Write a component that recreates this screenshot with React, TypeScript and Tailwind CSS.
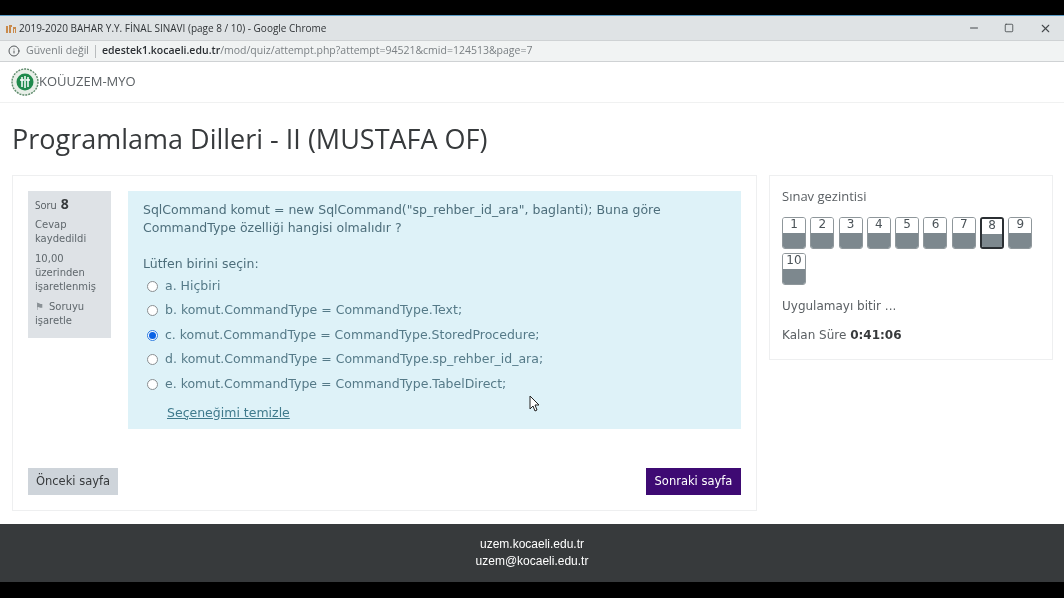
import { Info, Minus, Square, X } from "lucide-react";

const navItems = ["1", "2", "3", "4", "5", "6", "7", "8", "9", "10"];

const answers = [
  { key: "a", text: "a. Hiçbiri", checked: false },
  { key: "b", text: "b. komut.CommandType = CommandType.Text;", checked: false },
  { key: "c", text: "c. komut.CommandType = CommandType.StoredProcedure;", checked: true },
  { key: "d", text: "d. komut.CommandType = CommandType.sp_rehber_id_ara;", checked: false },
  { key: "e", text: "e. komut.CommandType = CommandType.TabelDirect;", checked: false },
];

function Logo() {
  return (
    <svg width="28" height="28" viewBox="0 0 28 28" className="shrink-0">
      <circle cx="14" cy="14" r="13" fill="#e8efe8" stroke="#5d8a6b" strokeWidth="1.4" strokeDasharray="2 1" />
      <circle cx="14" cy="14" r="8.5" fill="#1f8a4c" />
      <path d="M11 9v10M17 9v10M9 12h4M15 12h4M14 8v12" stroke="#ffffff" strokeWidth="1.5" />
    </svg>
  );
}

function Radio({ checked }: { checked: boolean }) {
  return (
    <span
      className={
        checked
          ? "w-[11px] h-[11px] rounded-full border border-[#2f7de1] bg-white flex items-center justify-center shrink-0"
          : "w-[11px] h-[11px] rounded-full border border-[#8a8f92] bg-white shrink-0"
      }
    >
      {checked && <span className="w-[7px] h-[7px] rounded-full bg-[#0b63e5]" />}
    </span>
  );
}

function NavButton({ label }: { label: string }) {
  const current = label === "8";
  return (
    <div
      className={
        current
          ? "w-[24px] h-[32px] rounded-[3px] border-2 border-[#2b2f33] overflow-hidden flex flex-col"
          : "w-[24px] h-[32px] rounded-[3px] border border-[#8f979b] overflow-hidden flex flex-col"
      }
    >
      <div className="h-[15px] bg-white text-[12px] leading-[13px] text-center text-[#4a5257]">{label}</div>
      <div className="flex-1 bg-[#7d888e]" />
    </div>
  );
}

export default function App() {
  return (
    <div className="w-[1064px] h-[598px] overflow-hidden bg-black flex flex-col font-['DejaVu_Sans',sans-serif] blur-[0.4px]">
      <div className="h-[15px] shrink-0" />

      {/* WINDOW TITLE */}
      <div className="h-[25px] shrink-0 bg-[#dfe3e5] border-t border-[#5a9bc4] flex items-center pl-[5px] font-['Open_Sans',sans-serif] text-[10px] text-[#2f3336]">
        <svg width="12" height="10" viewBox="0 0 12 10" className="mr-[2px] shrink-0">
          <path d="M1 10V3h2v7zM4 2h3v2H6v6H4zM8 10V4h3v6h-1V6H9v4z" fill="#c98a4b" />
        </svg>
        <span>2019-2020 BAHAR Y.Y. FİNAL SINAVI (page 8 / 10) - Google Chrome</span>
        <div className="ml-auto flex items-center text-[#45494c]">
          <Minus size={12} className="mr-[24px]" />
          <Square size={10} className="mr-[25px]" strokeWidth={2} />
          <X size={13} className="mr-[12px]" />
        </div>
      </div>

      {/* ADDRESS BAR */}
      <div className="h-[22px] shrink-0 bg-[#f1f3f3] border-t border-b border-[#cfd2d4] flex items-center pl-[8px] font-['Open_Sans',sans-serif] text-[10.5px] text-[#7b8084]">
        <Info size={12} className="text-[#55595c] mr-[6px]" />
        <span>Güvenli değil</span>
        <span className="w-px h-[13px] bg-[#b9bcbe] mx-[6px]" />
        <span className="text-[#2b2f33] font-semibold">edestek1.kocaeli.edu.tr</span>
        <span>/mod/quiz/attempt.php?attempt=94521&amp;cmid=124513&amp;page=7</span>
      </div>

      {/* PAGE */}
      <div className="flex-1 bg-white flex flex-col min-h-0">
        <div className="h-[41px] shrink-0 border-b border-[#f0f1f1] flex items-center pl-[11px] font-['Open_Sans',sans-serif] text-[13px] text-[#5b6064]">
          <Logo />
          <span>KOÜUZEM-MYO</span>
        </div>

        <h1 className="h-[72px] shrink-0 pl-[12px] pt-[16px] font-['Open_Sans',sans-serif] text-[27px] leading-[40px] text-[#373a3c]">
          Programlama Dilleri - II (MUSTAFA OF)
        </h1>

        <div className="flex items-start pl-[12px] pr-[12px] gap-[12px]">
          {/* QUESTION */}
          <div className="w-[745px] h-[336px] shrink-0 border border-[#eeeff0] pl-[15px] pr-[15px] pt-[15px] flex flex-col">
            <div className="flex gap-[17px]">
              <div className="w-[83px] h-[147px] shrink-0 bg-[#dee2e6] pl-[7px] pt-[6px] text-[10px] leading-[14px] text-[#5f676c]">
                <div className="h-[20px] flex items-baseline gap-[4px] font-['Open_Sans',sans-serif]">
                  <span className="text-[#50575c]">Soru</span>
                  <span className="text-[14px] font-bold text-[#373a3c]">8</span>
                </div>
                <div className="mt-[1px]">Cevap<br />kaydedildi</div>
                <div className="mt-[6px]">10,00<br />üzerinden<br />işaretlenmiş</div>
                <div className="mt-[6px]">
                  <span className="text-[#8a9196] mr-[5px]">⚑</span>Soruyu<br />işaretle
                </div>
              </div>

              <div className="w-[613px] h-[238px] bg-[#def2f8] pl-[15px] pt-[10px] text-[12.5px] text-[#4f7a8a]">
                <p className="leading-[18px] text-[#4d6e7b]">
                  SqlCommand komut = new SqlCommand("sp_rehber_id_ara", baglanti); Buna göre<br />
                  CommandType özelliği hangisi olmalıdır ?
                </p>
                <p className="mt-[18px] leading-[18px] text-[#4d6e7b]">Lütfen birini seçin:</p>
                <div className="mt-[1px] flex flex-col">
                  {answers.map((a) => (
                    <div key={a.key} className="h-[24.5px] flex items-center gap-[7px] pl-[4px] text-[#557a88]">
                      <Radio checked={a.checked} />
                      <span>{a.text}</span>
                    </div>
                  ))}
                </div>
                <div className="mt-[7px] pl-[24px] text-[#3f7a8c] underline leading-[18px]">Seçeneğimi temizle</div>
              </div>
            </div>

            <div className="mt-[39px] flex justify-between text-[11.5px]">
              <div className="w-[90px] h-[27px] bg-[#ced4da] flex items-center justify-center text-[#373a3c]">Önceki sayfa</div>
              <div className="w-[95px] h-[27px] bg-[#3e0a73] flex items-center justify-center text-white">Sonraki sayfa</div>
            </div>
          </div>

          {/* QUIZ NAVIGATION */}
          <div className="w-[284px] h-[185px] shrink-0 border border-[#eeeff0] pl-[12px] pt-[12px] text-[#5b6064]">
            <div className="font-['Open_Sans',sans-serif] text-[13px] leading-[16px]">Sınav gezintisi</div>
            <div className="mt-[13px] flex flex-wrap gap-x-[4.3px] gap-y-[4px] w-[270px]">
              {navItems.map((n) => (
                <NavButton key={n} label={n} />
              ))}
            </div>
            <div className="mt-[13px] text-[12px] leading-[16px]">Uygulamayı bitir ...</div>
            <div className="mt-[13px] text-[12px] leading-[16px]">
              Kalan Süre <b className="text-[#373a3c]">0:41:06</b>
            </div>
          </div>
        </div>

        {/* FOOTER */}
        <div className="mt-auto h-[58px] shrink-0 bg-[#373a3c] flex flex-col items-center justify-center font-['Liberation_Sans',sans-serif] text-[12px] leading-[17px] text-white">
          <div>uzem.kocaeli.edu.tr</div>
          <div>uzem@kocaeli.edu.tr</div>
        </div>
      </div>

      <div className="h-[16px] shrink-0" />

      {/* MOUSE CURSOR */}
      <svg width="12" height="17" viewBox="0 0 12 17" className="absolute left-[529px] top-[395px]">
        <path d="M1 1v13l3-3 2 5 2-1-2-5h4z" fill="#ffffff" stroke="#222222" strokeWidth="1" />
      </svg>
    </div>
  );
}
